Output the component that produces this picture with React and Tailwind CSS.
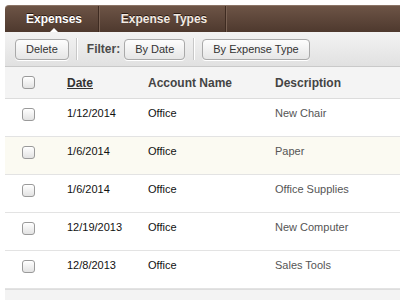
import React from "react";

const rows = [
  { date: "1/12/2014", account: "Office", desc: "New Chair" },
  { date: "1/6/2014", account: "Office", desc: "Paper", hl: true },
  { date: "1/6/2014", account: "Office", desc: "Office Supplies" },
  { date: "12/19/2013", account: "Office", desc: "New Computer" },
  { date: "12/8/2013", account: "Office", desc: "Sales Tools" },
];

function Check() {
  return (
    <div className="w-[13px] h-[13px] rounded-[3px] border border-[#9a9a9a] bg-gradient-to-b from-white to-[#e3e3e3] shadow-[inset_0_1px_0_#fff]" />
  );
}

function Btn({ children }) {
  return (
    <div className="h-[21px] px-[10px] flex items-center rounded-[4px] border border-[#a9a9a9] bg-gradient-to-b from-[#fdfdfd] to-[#e6e6e6] text-[11px] text-[#333] shadow-[0_1px_0_#fff]">
      {children}
    </div>
  );
}

function Divider() {
  return <div className="w-[2px] h-[22px] border-l border-[#c8c8c8] border-r border-r-white" />;
}

export default function App() {
  return (
    <div
      className="w-[400px] h-[300px] overflow-hidden bg-white pl-[5px] pt-[5px]"
      style={{ fontFamily: '"Liberation Sans", Arial, sans-serif' }}
    >
      <div className="w-[420px]">
        {/* tab bar */}
        <div className="h-[27px] rounded-tl-[4px] bg-gradient-to-b from-[#6d5446] to-[#4e392e] border-t border-[#8a7365] flex">
          <div className="relative w-[93px] pl-[5px] flex items-center justify-center text-[12px] font-bold text-white [text-shadow:0_-1px_0_#2a1a12]">
            Expenses
            <div className="absolute bottom-0 left-[45px] w-0 h-0 border-l-[4px] border-r-[4px] border-b-[4px] border-l-transparent border-r-transparent border-b-white" />
          </div>
          <div className="w-[2px] border-l border-[#3e2b21] border-r border-r-[#7a6254]" />
          <div className="w-[125px] pl-[3px] flex items-center justify-center text-[12px] font-bold text-[#f3ebe3] [text-shadow:0_-1px_0_#2a1a12]">
            Expense Types
          </div>
          <div className="w-[2px] border-l border-[#3e2b21] border-r border-r-[#7a6254]" />
        </div>
        {/* toolbar */}
        <div className="h-[35px] bg-gradient-to-b from-[#f3f3f3] to-[#e1e1e1] border-b border-[#c9c9c9] flex items-center pl-[10px]">
          <Btn>Delete</Btn>
          <div className="ml-[7px]"><Divider /></div>
          <div className="ml-[9px] text-[12px] font-bold text-[#4a4a4a]">Filter:</div>
          <div className="ml-[4px]"><Btn>By Date</Btn></div>
          <div className="ml-[8px]"><Divider /></div>
          <div className="ml-[7px]"><Btn>By Expense Type</Btn></div>
        </div>
        {/* header */}
        <div className="h-[32px] bg-[#f4f4f4] border-b border-[#dcdcdc] grid grid-cols-[62px_81px_127px_1fr] items-center text-[12px] font-bold text-[#444]">
          <div className="pl-[17px]"><Check /></div>
          <div className="underline text-[#333]">Date</div>
          <div>Account Name</div>
          <div>Description</div>
        </div>
        {rows.map((r, i) => (
          <div
            key={i}
            className={`h-[38px] pb-[8px] border-b border-[#e3e3e3] grid grid-cols-[62px_81px_127px_1fr] items-center text-[11px] ${r.hl ? "bg-[#fbfaf2]" : "bg-white"}`}
          >
            <div className="pl-[17px] pt-[2px]"><Check /></div>
            <div className="text-[#111]">{r.date}</div>
            <div className="text-[#111]">{r.account}</div>
            <div className="text-[#555]">{r.desc}</div>
          </div>
        ))}
        <div className="h-[20px] bg-[#f3f3f3] border-t border-[#dddddd]" />
      </div>
    </div>
  );
}
